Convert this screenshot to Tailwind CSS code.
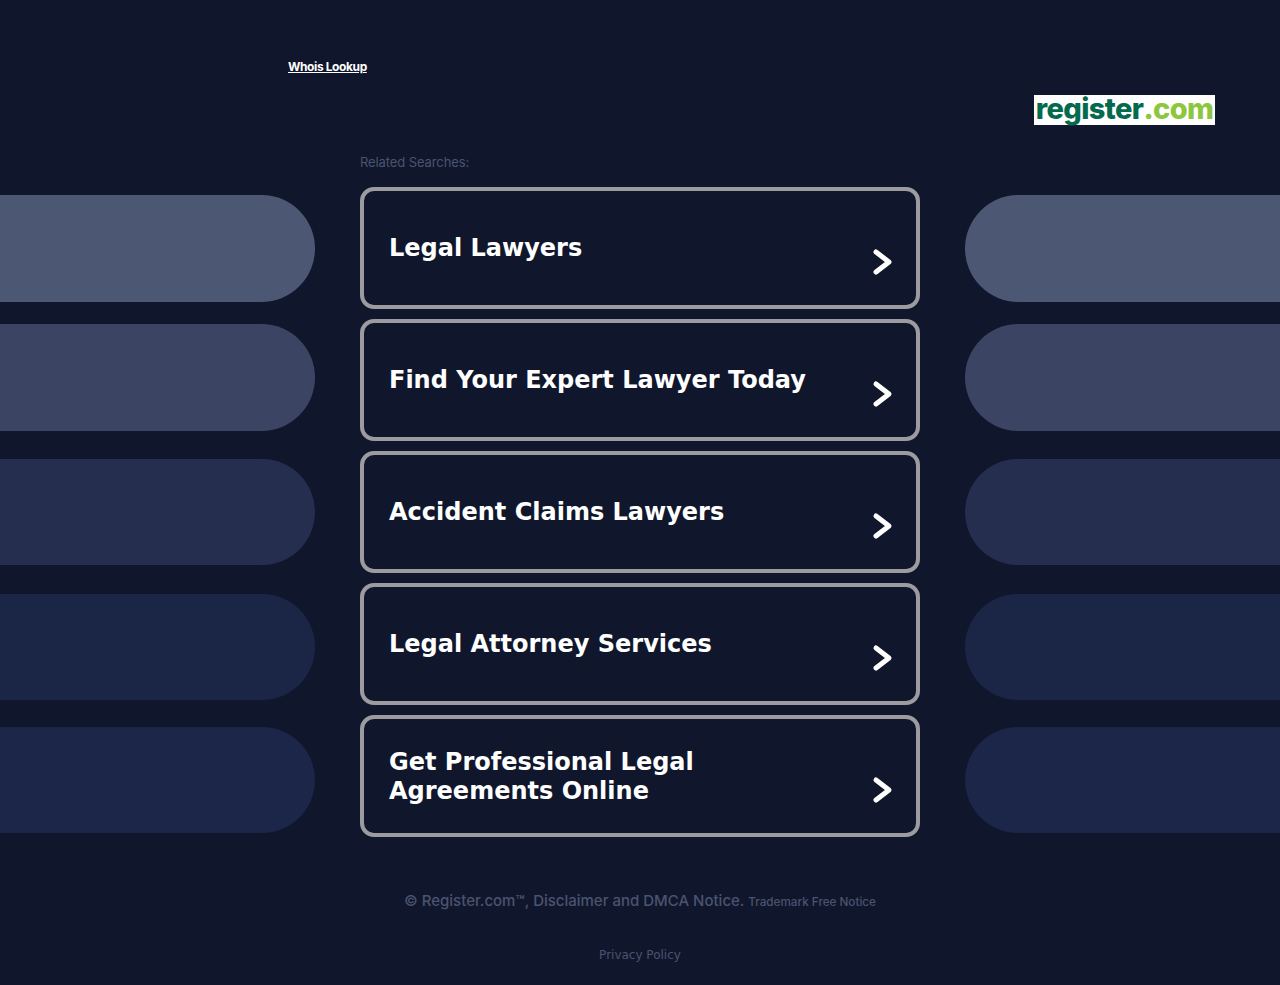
<!DOCTYPE html>
<html lang="en">
<head>
    <meta charset="UTF-8">
    <meta name="viewport" content="width=device-width, initial-scale=1.0">
    <title>Legal Lawyers</title>
    <script src="https://cdn.jsdelivr.net/npm/@tailwindcss/browser@4"></script>
</head>
<body class="bg-[#10172c] font-['DejaVu_Sans',sans-serif]">
    <div class="h-[985px] overflow-hidden flex flex-col">
        <!-- Header -->
        <div class="pl-[288px] pt-[60px] h-[95px]">
            <a href="#" class="block w-fit text-[12px] leading-[14px] font-bold text-white underline font-['Inter',sans-serif] tracking-[-0.4px]">Whois Lookup</a>
        </div>
        <div class="flex justify-end pr-[65px] h-[30px]">
            <div class="w-[181px] h-[30px] bg-white flex items-start justify-center font-['Inter',sans-serif] font-extrabold text-[29px] leading-[27px] tracking-[-0.6px]">
                <span class="text-[#046a4e]">register</span><span class="text-[#8dc63f]">.com</span>
            </div>
        </div>
        <div class="pl-[360px] pt-[30px] h-[62px]">
            <p class="text-[13px] leading-[15px] text-[#4a5370] tracking-[-0.1px] font-['Inter',sans-serif]">Related Searches:</p>
        </div>

        <!-- Main row -->
        <div class="flex justify-between">
            <div class="w-[315px] pt-[8px] flex flex-col">
                <div class="h-[107px] rounded-r-[54px] bg-[#4c5773]"></div>
                <div class="h-[107px] mt-[22px] rounded-r-[54px] bg-[#3b4463]"></div>
                <div class="h-[106px] mt-[28px] rounded-r-[54px] bg-[#252e4e]"></div>
                <div class="h-[106px] mt-[29px] rounded-r-[54px] bg-[#1b2647]"></div>
                <div class="h-[106px] mt-[27px] rounded-r-[54px] bg-[#1b2648]"></div>
            </div>

            <div class="w-[560px] flex flex-col gap-[10px]">
                <a href="#" class="h-[122px] border-4 border-[#9b9ba0] rounded-[14px] pl-[25px] pr-[21px] flex items-center justify-between text-white font-bold text-[24px] leading-[29px]">
                    <span class="w-[440px]">Legal Lawyers</span>
                    <svg class="w-[24px] h-[30px] mt-[27px]" viewBox="0 0 24 30" fill="none" stroke="#fff" stroke-width="5" stroke-linecap="round" stroke-linejoin="round"><path d="M5 5l13 10L5 25"/></svg>
                </a>
                <a href="#" class="h-[122px] border-4 border-[#9b9ba0] rounded-[14px] pl-[25px] pr-[21px] flex items-center justify-between text-white font-bold text-[24px] leading-[29px]">
                    <span class="w-[440px]">Find Your Expert Lawyer Today</span>
                    <svg class="w-[24px] h-[30px] mt-[27px]" viewBox="0 0 24 30" fill="none" stroke="#fff" stroke-width="5" stroke-linecap="round" stroke-linejoin="round"><path d="M5 5l13 10L5 25"/></svg>
                </a>
                <a href="#" class="h-[122px] border-4 border-[#9b9ba0] rounded-[14px] pl-[25px] pr-[21px] flex items-center justify-between text-white font-bold text-[24px] leading-[29px]">
                    <span class="w-[440px]">Accident Claims Lawyers</span>
                    <svg class="w-[24px] h-[30px] mt-[27px]" viewBox="0 0 24 30" fill="none" stroke="#fff" stroke-width="5" stroke-linecap="round" stroke-linejoin="round"><path d="M5 5l13 10L5 25"/></svg>
                </a>
                <a href="#" class="h-[122px] border-4 border-[#9b9ba0] rounded-[14px] pl-[25px] pr-[21px] flex items-center justify-between text-white font-bold text-[24px] leading-[29px]">
                    <span class="w-[440px]">Legal Attorney Services</span>
                    <svg class="w-[24px] h-[30px] mt-[27px]" viewBox="0 0 24 30" fill="none" stroke="#fff" stroke-width="5" stroke-linecap="round" stroke-linejoin="round"><path d="M5 5l13 10L5 25"/></svg>
                </a>
                <a href="#" class="h-[122px] border-4 border-[#9b9ba0] rounded-[14px] pl-[25px] pr-[21px] flex items-center justify-between text-white font-bold text-[24px] leading-[29px]">
                    <span class="w-[440px] pt-[1px]">Get Professional Legal Agreements Online</span>
                    <svg class="w-[24px] h-[30px] mt-[27px]" viewBox="0 0 24 30" fill="none" stroke="#fff" stroke-width="5" stroke-linecap="round" stroke-linejoin="round"><path d="M5 5l13 10L5 25"/></svg>
                </a>
            </div>

            <div class="w-[315px] pt-[8px] flex flex-col">
                <div class="h-[107px] rounded-l-[54px] bg-[#4c5773]"></div>
                <div class="h-[107px] mt-[22px] rounded-l-[54px] bg-[#3b4463]"></div>
                <div class="h-[106px] mt-[28px] rounded-l-[54px] bg-[#252e4e]"></div>
                <div class="h-[106px] mt-[29px] rounded-l-[54px] bg-[#1b2647]"></div>
                <div class="h-[106px] mt-[27px] rounded-l-[54px] bg-[#1b2648]"></div>
            </div>
        </div>

        <!-- Footer -->
        <p class="mt-[55px] text-center text-[#4a5370] text-[15px] leading-[18px] font-['Inter',sans-serif] font-medium">© Register.com™, Disclaimer and DMCA Notice. <span class="text-[11.7px]">Trademark Free Notice</span></p>
        <p class="mt-[37px] text-center text-[#4a5370] text-[12px] leading-[14px]">Privacy Policy</p>
    </div>
</body>
</html>
